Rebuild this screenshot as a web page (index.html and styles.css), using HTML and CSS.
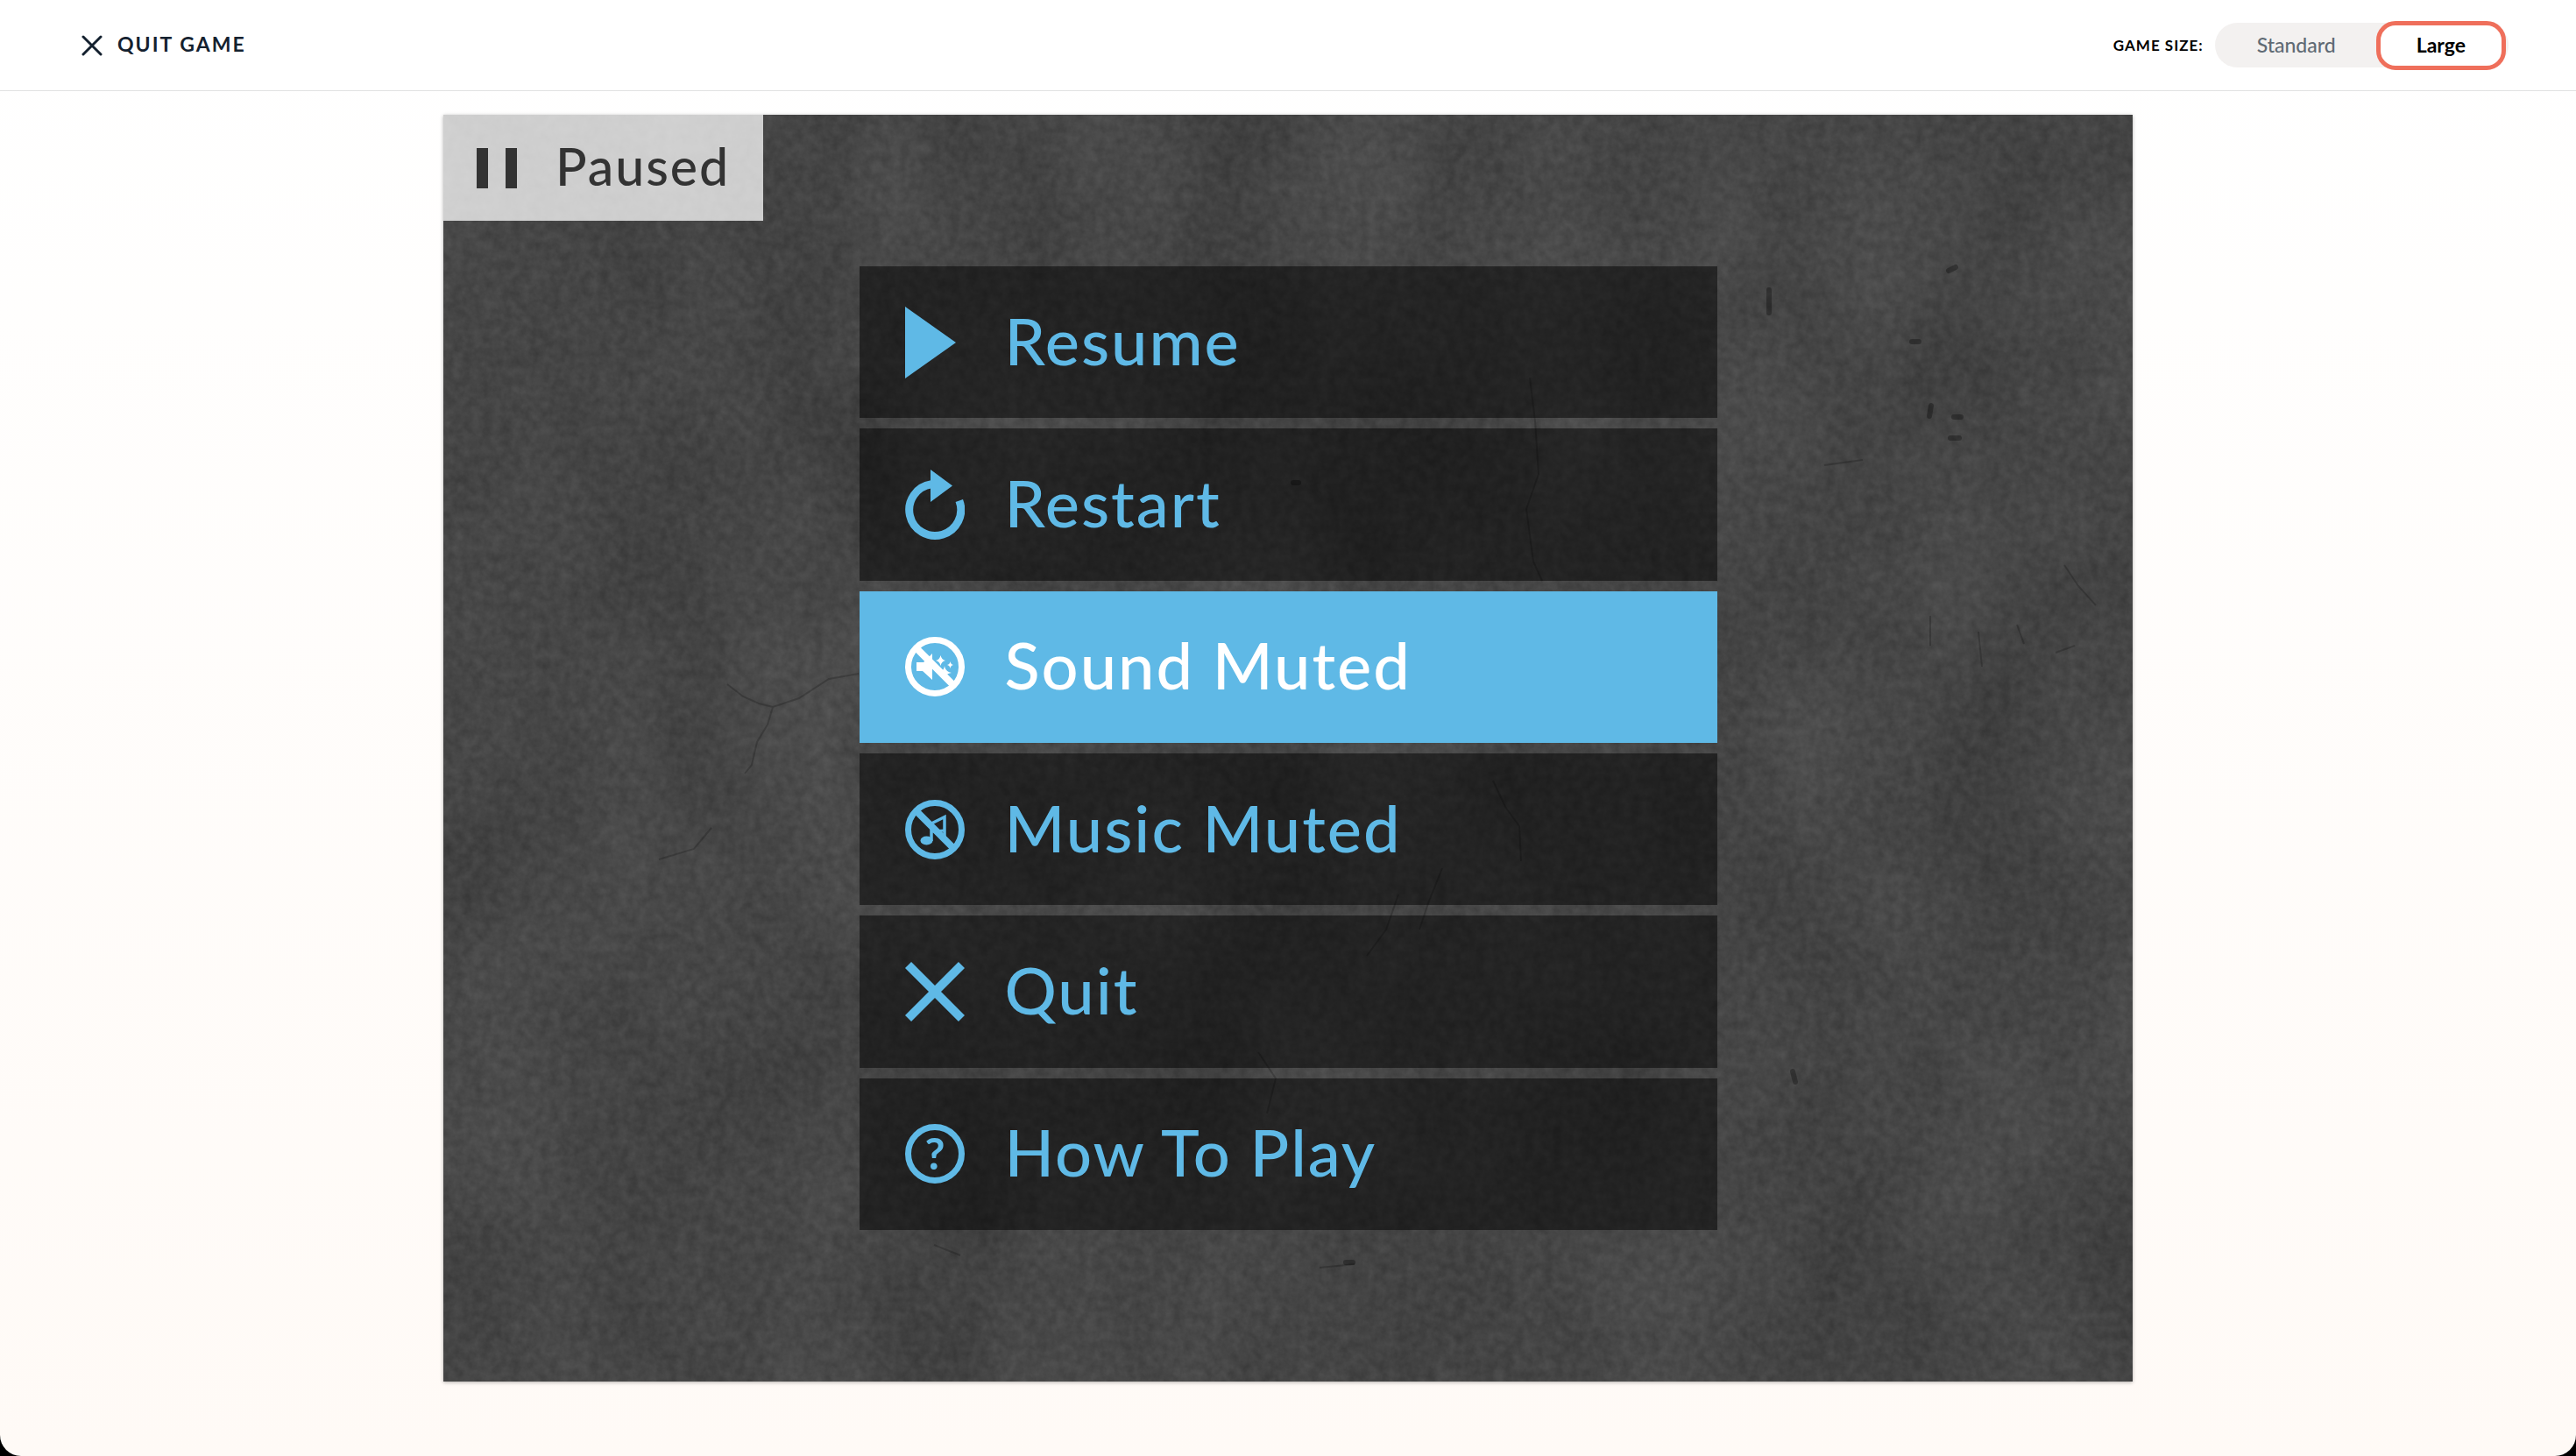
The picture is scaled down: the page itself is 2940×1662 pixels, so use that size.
FILE: index.html
```html
<!DOCTYPE html>
<html lang="en">
<head>
    <meta charset="UTF-8">
    <title>Game paused</title>
    <link rel="stylesheet" href="styles.css">
</head>
<body>
<div class="page">
    <header class="topbar">
        <button class="quit-game" type="button">
            <svg width="24" height="24" viewBox="0 0 24 24"><path d="M2 2L22 22M22 2L2 22"/></svg>
            <span class="text">Quit game</span>
        </button>
        <fieldset class="game-size">
            <legend>Game size:</legend>
            <div class="switch">
                <input type="radio" name="size" id="size-standard">
                <label for="size-standard">Standard</label>
                <input type="radio" name="size" id="size-large" checked>
                <label for="size-large">Large</label>
            </div>
        </fieldset>
    </header>

    <main class="main">
        <div class="stage">
            <!-- concrete wall -->
            <svg class="wall" viewBox="0 0 1928 1446" preserveAspectRatio="none">
                <filter id="concrete" x="0" y="0" width="100%" height="100%" color-interpolation-filters="sRGB">
                    <feTurbulence type="fractalNoise" baseFrequency="0.006 0.004" numOctaves="6" seed="21"/>
                    <feColorMatrix values="0.09 0 0 0 0.228  0.09 0 0 0 0.228  0.09 0 0 0 0.228  0 0 0 0 1" result="stains"/>
                    <feTurbulence type="fractalNoise" baseFrequency="0.09" numOctaves="4" seed="3"/>
                    <feColorMatrix values="0.09 0 0 0 0  0.09 0 0 0 0  0.09 0 0 0 0  0 0 0 0 1" result="grain"/>
                    <feComposite in="stains" in2="grain" operator="arithmetic" k2="1" k3="1" k4="-0.045"/>
                    <feColorMatrix values="1 0 0 0 0  0 1 0 0 0  0 0 1 0 0  0 0 0 0 1"/>
                </filter>
                <rect width="1928" height="1446" filter="url(#concrete)"/>
                <g class="cracks">
                    <path d="M1240 300l6 50 4 60-14 40 8 60 10 22"/>
                    <path d="M1198 760l14 30 16 22 2 40M1140 860l-16 40-10 30M1090 890l-14 40-22 30"/>
                    <path d="M1576 400l44-6M1697 572v34M1752 590l4 40M1796 582l8 22M1850 514l16 24 20 22"/>
                    <path d="M1840 614l22-8M324 650l18 14 18 8 16 4 30-10 34-22 34-6M376 676l-6 20-12 20-6 26-8 10M246 850l40-12 20-24"/>
                    <path d="M930 1070l20 30-10 40M560 1290l30 12M1000 1316l40-4"/>
                </g>
                <g class="pits">
                    <path d="M1513 200v26M1698 332l-2 12M1724 345h8M1720 369h10M1676 259h8M1718 178l8-4M1540 1092l3 12M970 420h6M1030 1310h8"/>
                </g>
            </svg>

            <div class="paused">
                <svg width="46" height="46" viewBox="0 0 46 46"><path d="M0 0h13v46H0zM33 0h13v46H33z"/></svg>
                <span class="text">Paused</span>
            </div>

            <nav class="menu">
                <button class="item" type="button">
                    <svg class="icon" viewBox="0 0 68 82"><path class="fill" d="M0 0L58 41L0 82z"/></svg>
                    <span class="text">Resume</span>
                </button>
                <button class="item" type="button">
                    <svg class="icon" viewBox="0 0 68 82">
                        <path d="M30 17.8A29.5 29.5 0 1 0 61.8 36.5" stroke-width="9"/>
                        <path class="fill" d="M29 1L54 19.5L29 38z"/>
                    </svg>
                    <span class="text">Restart</span>
                </button>
                <button class="item current" type="button">
                    <svg class="icon" viewBox="0 0 68 82">
                        <circle cx="34" cy="41" r="30.5" stroke-width="7"/>
                        <path d="M12 19L56 63" stroke-width="8"/>
                        <path class="fill" d="M13 36h8L31 26v30L20 46h-7z"/>
                        <path class="fill" d="M40.500 28q1 5 5.500 6q-4.500 1-5.500 6q-1-5-5.500-6q4.500-1 5.500-6zM51.500 35q.6 3.500 3.500 4q-3 .6-3.500 4q-.6-3.400-3.500-4q3-.5 3.500-4zM45 40q1 7 8 8q-7 1-8 6q-2-5-7-6q6-1 7-8z"/>
                    </svg>
                    <span class="text">Sound Muted</span>
                </button>
                <button class="item" type="button">
                    <svg class="icon" viewBox="0 0 68 82">
                        <circle cx="34" cy="41" r="30.5" stroke-width="7"/>
                        <path d="M12 19L56 63" stroke-width="8"/>
                        <path d="M30 54V34L45 26.500V50" stroke-width="3.500"/>
                        <path d="M31 43L45 42" stroke-width="3"/>
                        <ellipse class="fill" cx="24.500" cy="53.500" rx="7" ry="5"/>
                    </svg>
                    <span class="text">Music Muted</span>
                </button>
                <button class="item" type="button">
                    <svg class="icon" viewBox="0 0 68 82"><path d="M3.500 10.500L64.500 71.500M64.500 10.500L3.500 71.500" stroke-width="10"/></svg>
                    <span class="text">Quit</span>
                </button>
                <button class="item" type="button">
                    <svg class="icon" viewBox="0 0 68 82">
                        <circle cx="34" cy="41" r="30.5" stroke-width="7"/>
                        <text x="34" y="59">?</text>
                    </svg>
                    <span class="text">How To Play</span>
                </button>
            </nav>
        </div>
    </main>
</div>
</body>
</html>
```

FILE: styles.css
```css
* {
    box-sizing: border-box;
    margin: 0;
    padding: 0;
}

html {
    background: #000;
}

body {
    font-family: Lato, "Open Sans", sans-serif;
}

button {
    border: 0;
    background: none;
    font: inherit;
    color: inherit;
    cursor: pointer;
}

.page {
    height: 100vh;
    display: flex;
    flex-direction: column;
    border-radius: 0 0 24px 24px;
    background: linear-gradient(#fff, #fffaf6);
    overflow: hidden;
}

.text {
    padding-bottom: 4px;
}

/* top bar */
.topbar {
    height: 104px;
    padding: 0 77px 0 93px;
    display: flex;
    align-items: center;
    justify-content: space-between;
    background: #fff;
    border-bottom: 1px solid #e2e2e2;
}

.quit-game {
    display: flex;
    align-items: center;
    gap: 17px;
    font-size: 23px;
    line-height: 28px;
    font-weight: 700;
    letter-spacing: 2px;
    text-transform: uppercase;
    color: #14212f;
}

.quit-game svg {
    fill: none;
    stroke: currentColor;
    stroke-width: 3;
    stroke-linecap: round;
}

.game-size {
    display: flex;
    align-items: center;
    gap: 13px;
    border: 0;
}

.game-size legend {
    float: left;
    font-size: 17px;
    font-weight: 700;
    letter-spacing: 1px;
    text-transform: uppercase;
}

.switch {
    display: flex;
    align-items: center;
    height: 51px;
    padding-right: 3px;
    border-radius: 26px;
    background: #f3f1f0;
}

.switch input {
    position: absolute;
    opacity: 0;
}

.switch label {
    height: 56px;
    padding: 0 46px 2px 48px;
    display: flex;
    align-items: center;
    font-size: 23px;
    font-weight: 500;
    color: #5f6a74;
    cursor: pointer;
}

.switch input:checked + label {
    padding: 0 41px 2px;
    border: 5px solid #ef6f5b;
    border-radius: 22px;
    background: #fff;
    font-weight: 700;
    color: #000;
}

/* game */
.main {
    flex: 1;
    min-height: 0;
    padding: 27px 0 85px;
    display: flex;
    justify-content: center;
}

.stage {
    position: relative;
    height: 100%;
    aspect-ratio: 4 / 3;
    background: #454545;
    box-shadow: 0 1px 4px rgba(0, 0, 0, 0.3);
}

.wall {
    position: absolute;
    left: 0;
    top: 0;
    width: 100%;
    height: 100%;
}

.cracks {
    fill: none;
    stroke: #000;
    stroke-width: 2;
    opacity: 0.2;
}

.pits {
    fill: none;
    stroke: #000;
    stroke-width: 6;
    stroke-linecap: round;
    opacity: 0.3;
}

.paused {
    position: absolute;
    left: 0;
    top: 0;
    height: 121px;
    padding: 0 38px;
    display: flex;
    align-items: center;
    gap: 44px;
    background: rgba(255, 255, 255, 0.74);
    font-size: 59px;
    font-weight: 500;
    letter-spacing: 2px;
    color: #333;
}

.paused svg {
    fill: currentColor;
}

.menu {
    position: relative;
    width: 979px;
    height: 100%;
    margin: 0 auto;
    padding: 173px 0;
    display: grid;
    grid-auto-rows: 1fr;
    gap: 12px;
}

.item {
    padding: 0 52px;
    display: flex;
    align-items: center;
    gap: 46px;
    background: rgba(0, 0, 0, 0.5);
    font-size: 74px;
    line-height: 88px;
    font-weight: 500;
    letter-spacing: 2px;
    color: #5fb9e6;
}

.item.current {
    background: #5fb9e6;
    color: #fff;
}

.icon {
    width: 68px;
    height: 82px;
    fill: none;
    stroke: currentColor;
}

.icon .fill {
    fill: currentColor;
    stroke: none;
}

.icon text {
    fill: currentColor;
    stroke: none;
    font-size: 50px;
    font-weight: 700;
    text-anchor: middle;
    letter-spacing: 0;
}
```
